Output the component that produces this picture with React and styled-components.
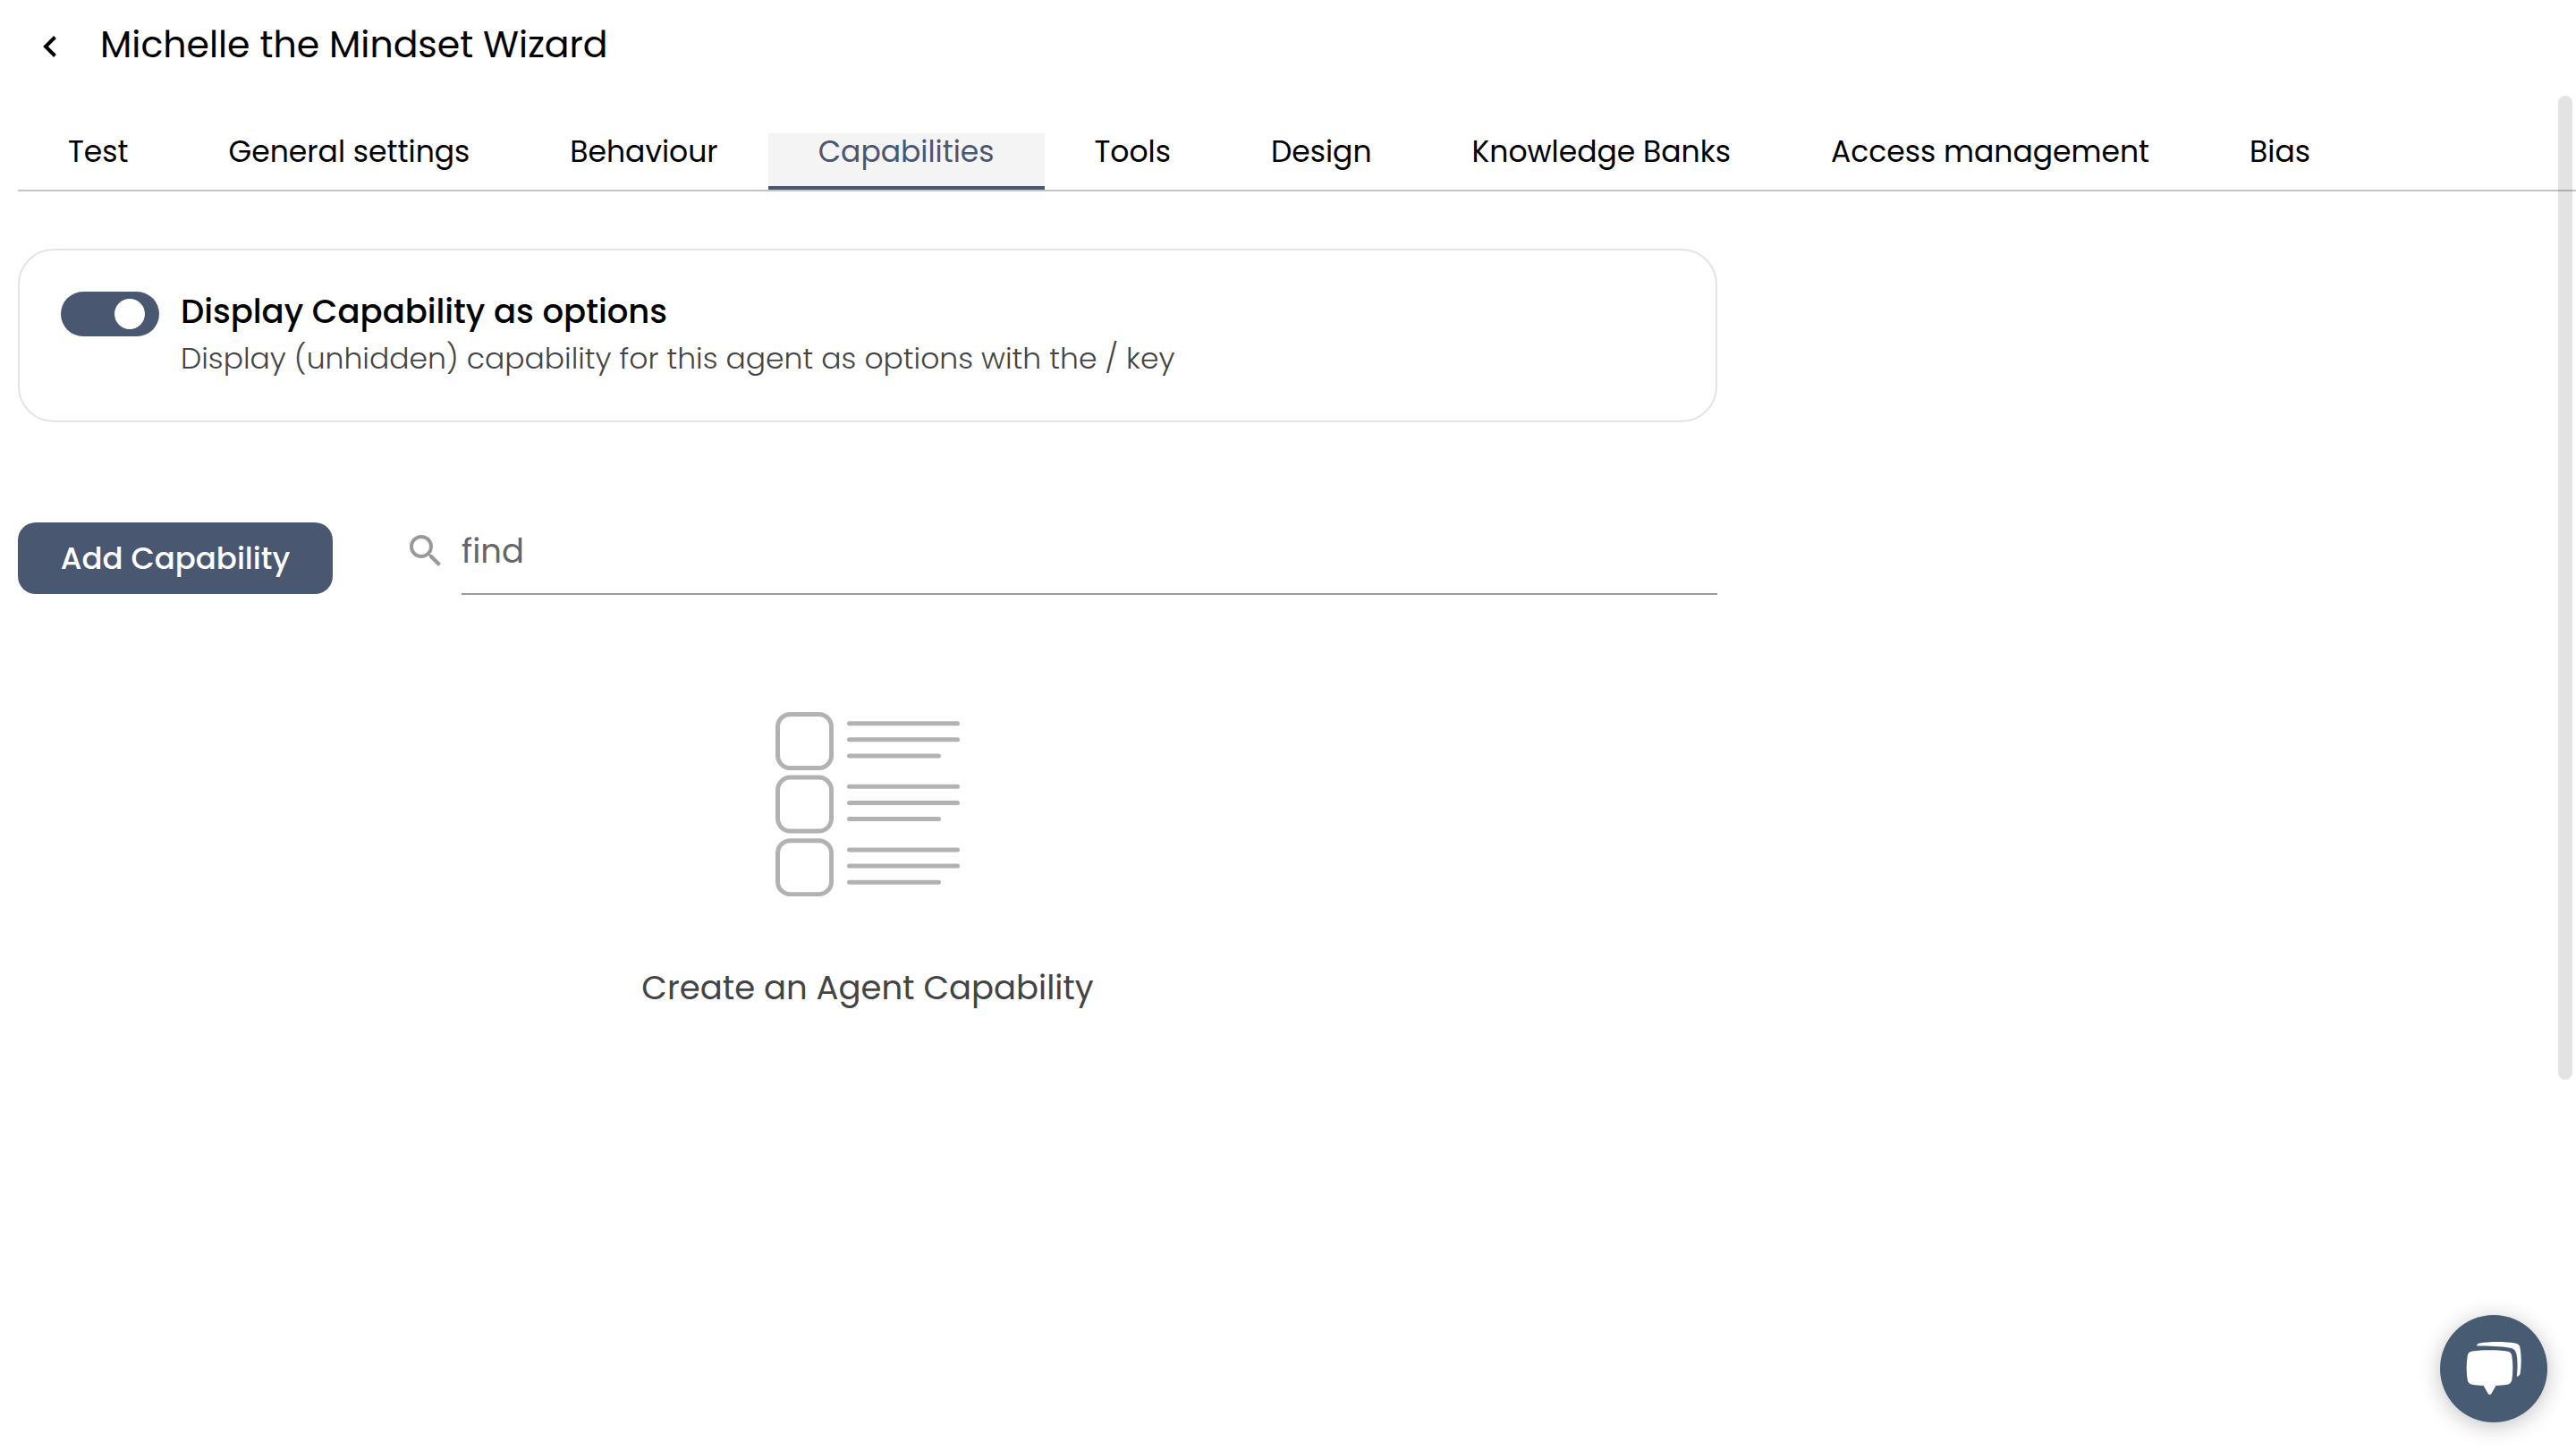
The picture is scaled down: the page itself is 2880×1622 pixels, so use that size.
import React, { useState } from "react";
import styled, { createGlobalStyle } from "styled-components";

const ink = "#4a5771";

const GlobalStyle = createGlobalStyle`
  * { box-sizing: border-box; }
  body {
    margin: 0;
    background: #fff;
    color: #000;
    font-family: Poppins, Inter, "Open Sans", sans-serif;
    font-size: 33px;
    line-height: 48px;
    overflow: hidden;
  }
  button, input { font: inherit; }
`;

const Page = styled.div`
  min-height: 100vh;
  padding-left: 20px;
`;

const Header = styled.header`
  display: flex;
  align-items: center;
  gap: 36px;
  height: 100px;
  padding-left: 16px;
`;

const BackButton = styled.button`
  display: flex;
  align-items: center;
  justify-content: center;
  width: 40px;
  height: 40px;
  margin-top: 4px;
  padding: 0;
  border: 0;
  background: none;
  color: #000;
`;

const Title = styled.h1`
  margin: 0;
  font-size: 41px;
  font-weight: 400;
  line-height: 64px;
`;

const Tabs = styled.nav`
  display: flex;
  margin-top: 49px;
  border-bottom: 2px solid #c4c4c4;
`;

const Tab = styled.a`
  height: 63px;
  padding: 0 56px;
  border-bottom: 4px solid ${(p) => (p.$active ? ink : "transparent")};
  background: ${(p) => (p.$active ? "#f4f4f4" : "transparent")};
  color: ${(p) => (p.$active ? ink : "#000")};
  line-height: 42px;
  text-decoration: none;
  white-space: nowrap;
`;

const Content = styled.main`
  width: 67%;
  max-width: 1900px;
  padding-top: 64px;
`;

const Card = styled.section`
  display: flex;
  align-items: flex-start;
  gap: 24px;
  padding: 42px 46px;
  border: 2px solid #e4e4e4;
  border-radius: 40px;
`;

const Switch = styled.input`
  appearance: none;
  display: flex;
  align-items: center;
  flex: none;
  width: 110px;
  height: 50px;
  margin: 4px 0 0;
  padding: 0 16px;
  border-radius: 25px;
  background: ${(p) => (p.checked ? ink : "#b2b2b2")};

  &::before {
    content: "";
    width: 34px;
    height: 34px;
    margin-left: ${(p) => (p.checked ? "auto" : "0")};
    border-radius: 50%;
    background: #fff;
  }
`;

const CardLabel = styled.label`
  display: block;
  font-size: 37px;
  font-weight: 500;
  line-height: 52px;
`;

const CardHint = styled.p`
  margin: 0;
  color: #444;
  font-weight: 300;
  line-height: 54px;
`;

const Toolbar = styled.div`
  display: flex;
  align-items: flex-start;
  gap: 80px;
  margin-top: 112px;
`;

const AddButton = styled.button`
  flex: none;
  width: 352px;
  height: 80px;
  padding: 0;
  border: 0;
  border-radius: 20px;
  background: ${ink};
  color: #fff;
  font-size: 34px;
  font-weight: 500;
`;

const SearchBox = styled.div`
  display: flex;
  flex: 1;
  height: 81px;

  svg { flex: none; margin: 8px 16px 0 0; }
`;

const SearchInput = styled.input`
  flex: 1;
  min-width: 0;
  padding: 0 0 16px;
  border: 0;
  border-bottom: 2px solid #999;
  outline: 0;
  background: none;
  font-size: 37px;

  &::placeholder { color: #666; opacity: 1; }
`;

const Empty = styled.section`
  display: flex;
  flex-direction: column;
  align-items: center;
  gap: 76px;
  margin-top: 131px;
`;

const EmptyText = styled.p`
  margin: 0;
  color: #444;
  font-size: 37px;
  line-height: 52px;
`;

const ScrollThumb = styled.div`
  position: fixed;
  top: 107px;
  right: 4px;
  width: 16px;
  height: 1100px;
  border-radius: 8px;
  background: rgba(0, 0, 0, 0.11);
`;

const ChatButton = styled.button`
  position: fixed;
  right: 32px;
  bottom: 32px;
  width: 120px;
  height: 120px;
  padding: 0;
  border: 0;
  border-radius: 50%;
  background: #475b73;
  box-shadow: 0 4px 24px rgba(0, 0, 0, 0.24);

  svg { display: block; }
`;

const tabs = [
  "Test",
  "General settings",
  "Behaviour",
  "Capabilities",
  "Tools",
  "Design",
  "Knowledge Banks",
  "Access management",
  "Bias",
];

function ListArt() {
  return (
    <svg width="206" height="206" viewBox="0 0 206 206" fill="none" stroke="#b2b2b2" strokeWidth="5" strokeLinecap="round" aria-hidden="true">
      {[0, 70.6, 141.2].map((y) => (
        <g key={y} transform={`translate(0 ${y})`}>
          <rect x="2.5" y="2.5" width="60" height="60" rx="14" />
          <path d="M82.5 12.7h121M82.5 30.8h121M82.5 49h100" />
        </g>
      ))}
    </svg>
  );
}

export default function App() {
  const [active, setActive] = useState("Capabilities");
  const [shown, setShown] = useState(true);

  return (
    <>
      <GlobalStyle />
      <Page>
        <Header>
          <BackButton aria-label="Back">
            <svg width="40" height="40" viewBox="0 0 40 40" fill="none" stroke="currentColor" strokeWidth="4" aria-hidden="true">
              <path d="M25.500 9.500 15 20l10.500 10.500" />
            </svg>
          </BackButton>
          <Title>Michelle the Mindset Wizard</Title>
        </Header>
        <Tabs>
          {tabs.map((name) => (
            <Tab key={name} href="#" $active={name === active} onClick={() => setActive(name)}>
              {name}
            </Tab>
          ))}
        </Tabs>
        <Content>
          <Card>
            <Switch id="show" type="checkbox" role="switch" checked={shown} onChange={() => setShown(!shown)} />
            <div>
              <CardLabel htmlFor="show">Display Capability as options</CardLabel>
              <CardHint>Display (unhidden) capability for this agent as options with the / key</CardHint>
            </div>
          </Card>
          <Toolbar>
            <AddButton>Add Capability</AddButton>
            <SearchBox>
              <svg width="48" height="48" viewBox="0 0 24 24" fill="#999" aria-hidden="true">
                <path d="M15.5 14h-.79l-.28-.27A6.47 6.47 0 0 0 16 9.5 6.5 6.5 0 1 0 9.5 16c1.61 0 3.09-.59 4.23-1.57l.27.28v.79l5 4.99L20.49 19l-4.99-5zm-6 0C7.01 14 5 11.99 5 9.5S7.01 5 9.5 5 14 7.01 14 9.5 11.99 14 9.5 14z" />
              </svg>
              <SearchInput type="text" placeholder="find" aria-label="find" />
            </SearchBox>
          </Toolbar>
          <Empty>
            <ListArt />
            <EmptyText>Create an Agent Capability</EmptyText>
          </Empty>
        </Content>
      </Page>
      <ScrollThumb />
      <ChatButton aria-label="Open chat">
        <svg width="120" height="120" viewBox="0 0 120 120" fill="#fff" aria-hidden="true">
          <path d="M36 40.5c10-1.8 29-1.8 39 0 3 .6 4.800 2 5.300 5 1.400 9 1.400 19 0 27-.5 3-2.300 4.800-5.300 5.300-4 .7-8.500 1-12.500 1.200l-5.200 9c-.8 1.400-2.800 1.400-3.600 0l-5-9c-4-.1-8.700-.5-12.700-1.200-3-.5-4.800-2.300-5.300-5.300-1.400-8-1.400-18 0-27 .5-3 2.300-4.400 5.300-5z" />
          <path d="M41 34.500c0-1.500 1-2.500 3-3 11-2 29-2 40 0 3 .5 5 2 5.500 5 1.500 9 1.500 19 .3 28-.4 2.500-2 4-4 4.500 1.200-10 1-18-.3-25-.8-4-3-6.500-7-7.200-11-2-24-2.300-37.500-2.300z" />
        </svg>
      </ChatButton>
    </>
  );
}
